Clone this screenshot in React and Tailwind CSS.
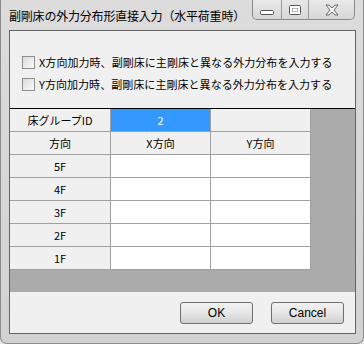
import React from "react";

const jp = { fontFamily: '"Noto Sans CJK JP", "Liberation Sans", sans-serif' };

const floors = ["5F", "4F", "3F", "2F", "1F"];

export default function App() {
  return (
    <div
      className="relative w-[364px] h-[344px] overflow-hidden bg-[#e4e4e4] text-black"
      style={jp}
    >
      <div className="flex h-[344px] flex-col rounded-b-[7px] border-x border-b border-[#8c8c8c] bg-gradient-to-b from-[#dcdcdc] to-[#d2d2d2]">
        {/* title bar */}
        <div className="flex h-[30px] shrink-0">
          <div className="self-center pl-[8px] pt-[1px] text-[12px] leading-none tracking-[-0.2px]">
            副剛床の外力分布形直接入力（水平荷重時）
          </div>
          <CaptionButtons />
        </div>

        {/* client area */}
        <div className="ml-[8px] mr-[7px] flex h-[304px] flex-col border border-[#646464] bg-[#f0f0f0]">
          <div className="flex h-[77px] shrink-0 flex-col gap-[9px] pl-[12px] pt-[25px] text-[11px] leading-[13px]">
            <Check label="X方向加力時、副剛床に主剛床と異なる外力分布を入力する" />
            <Check label="Y方向加力時、副剛床に主剛床と異なる外力分布を入力する" />
          </div>

          <div className="h-[184px] shrink-0 border-t border-black bg-[#ababab]">
            <div className="grid w-[301px] grid-cols-[101px_100px_100px] text-[11px]">
              <Cell head>床グループID</Cell>
              <Cell sel>2</Cell>
              <Cell head />
              <Cell head>方向</Cell>
              <Cell head>X方向</Cell>
              <Cell head>Y方向</Cell>
              {floors.map((f) => (
                <React.Fragment key={f}>
                  <Cell head>{f}</Cell>
                  <Cell />
                  <Cell />
                </React.Fragment>
              ))}
            </div>
          </div>

          <div className="flex flex-1 items-center justify-end gap-[18px] pr-[11px]">
            <Button>OK</Button>
            <Button>Cancel</Button>
          </div>
        </div>
      </div>
    </div>
  );
}

function Cell({ children, head, sel }) {
  const bg = sel ? "bg-[#3399ff] text-white" : head ? "bg-[#f0f0f0]" : "bg-white";
  return (
    <div
      className={`flex h-[23px] items-center justify-center border-b border-r border-[#a0a0a0] leading-none ${bg}`}
    >
      {children}
    </div>
  );
}

function Check({ label }) {
  return (
    <div className="flex items-center gap-[4px]">
      <span className="block h-[13px] w-[13px] border border-[#8e8f8f] bg-gradient-to-br from-[#dcdcdc] to-[#fafafa]" />
      <span className="tracking-[0.05px]">{label}</span>
    </div>
  );
}

function Button({ children }) {
  return (
    <div
      className="flex h-[22px] w-[73px] items-center justify-center rounded-[3px] border border-[#707070] bg-gradient-to-b from-[#f2f2f2] via-[#e6e6e6] to-[#cfcfcf] text-[12px] leading-none"
      style={{ fontFamily: '"Liberation Sans", sans-serif' }}
    >
      {children}
    </div>
  );
}

function CaptionButtons() {
  return (
    <div className="ml-auto mr-[8px] flex h-[20px] self-start overflow-hidden rounded-b-[5px] border-x border-b border-[#8a8a8a] bg-gradient-to-b from-[#e8e8e8] to-[#d8d8d8]">
      <div className="flex w-[29px] items-center justify-center border-r border-[#9a9a9a]">
        <svg width="14" height="8" viewBox="0 0 14 8" className="mt-[4px]">
          <rect x="0.5" y="2.5" width="13" height="4" rx="1" fill="#fff" stroke="#555" />
        </svg>
      </div>
      <div className="flex w-[27px] items-center justify-center border-r border-[#9a9a9a]">
        <svg width="12" height="10" viewBox="0 0 12 10">
          <rect x="0.5" y="0.5" width="11" height="9" rx="1" fill="#fff" stroke="#555" />
          <rect x="3" y="3" width="6" height="4" fill="#777" />
          <rect x="3.5" y="3.5" width="5" height="3" fill="#fff" />
        </svg>
      </div>
      <div className="flex w-[45px] items-center justify-center">
        <svg width="16" height="12" viewBox="0 0 16 12">
          <path
            d="M2 1 L5 1 L8 4 L11 1 L14 1 L10 6 L14 11 L11 11 L8 8 L5 11 L2 11 L6 6 Z"
            fill="#f4f4f4"
            stroke="#666"
            strokeWidth="1"
            strokeLinejoin="round"
          />
        </svg>
      </div>
    </div>
  );
}
